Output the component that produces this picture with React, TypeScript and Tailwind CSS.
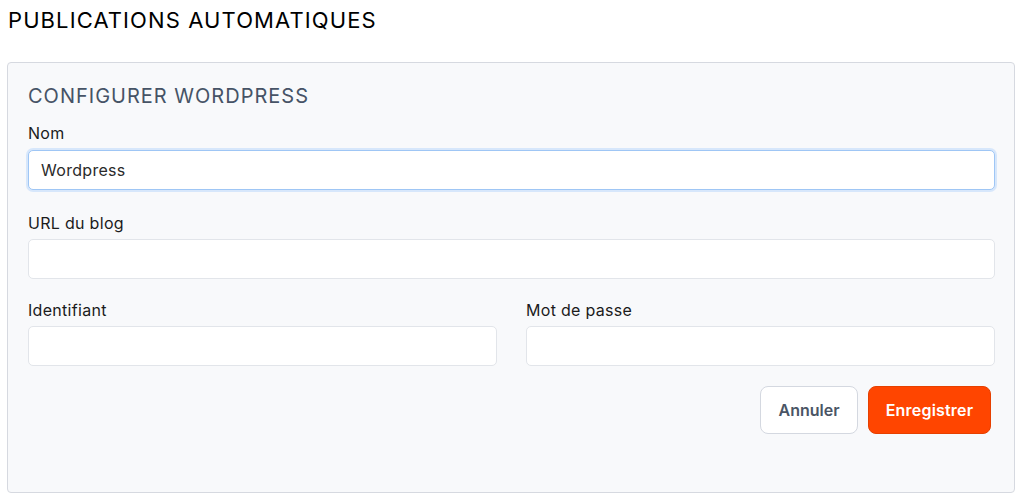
export default function App() {
  return (
    <div className="min-h-screen bg-white px-2 pt-[6px] text-[#111] [font-family:Inter,'Liberation_Sans',sans-serif]">
      <h1 className="text-[22px] leading-[29px] font-normal tracking-[1.1px] text-black">PUBLICATIONS AUTOMATIQUES</h1>
      <div className="mt-[27px] h-[431px] w-[1008px] -ml-px rounded-[4px] border border-[#d6d9e0] bg-[#f8f9fb] pl-5 pr-[19px] pt-[20px]">
        <h2 className="text-[20px] leading-[26px] tracking-[1px] text-[#465366]">CONFIGURER WORDPRESS</h2>
        <div className="mt-[13px] flex flex-col">
          <label className="text-[16px] leading-[22px] tracking-[0.3px] text-[#1b1b1b]">Nom</label>
          <input
            defaultValue="Wordpress"
            className="mt-[6px] h-[40px] w-full rounded-[5px] border border-[#9fc6f5] bg-white px-3 text-[16px] tracking-[0.3px] text-[#2a2a2a] shadow-[0_0_0_2px_#d7e7fb] outline-none"
          />
        </div>
        <div className="mt-[22px] flex flex-col">
          <label className="text-[16px] leading-[22px] tracking-[0.3px] text-[#1b1b1b]">URL du blog</label>
          <input className="mt-[5px] h-[40px] w-full rounded-[5px] border border-[#e2e5ea] bg-white px-3 text-[16px] outline-none" />
        </div>
        <div className="mt-[20px] grid grid-cols-2 gap-[29px]">
          <div className="flex flex-col">
            <label className="text-[16px] leading-[22px] tracking-[0.3px] text-[#1b1b1b]">Identifiant</label>
            <input className="mt-[5px] h-[40px] w-full rounded-[5px] border border-[#e2e5ea] bg-white px-3 text-[16px] outline-none" />
          </div>
          <div className="flex flex-col">
            <label className="text-[16px] leading-[22px] tracking-[0.3px] text-[#1b1b1b]">Mot de passe</label>
            <input type="password" className="mt-[5px] h-[40px] w-full rounded-[5px] border border-[#e2e5ea] bg-white px-3 text-[16px] outline-none" />
          </div>
        </div>
        <div className="mt-[20px] flex justify-end gap-[10px] pr-[4px]">
          <button className="h-[48px] w-[98px] rounded-[8px] border border-[#d4d8e0] bg-white text-[16px] font-semibold text-[#4a5565]">Annuler</button>
          <button className="h-[48px] w-[123px] rounded-[8px] border border-[#e64000] bg-[#ff4500] text-[16px] font-semibold tracking-[0.2px] text-white">Enregistrer</button>
        </div>
      </div>
    </div>
  );
}
